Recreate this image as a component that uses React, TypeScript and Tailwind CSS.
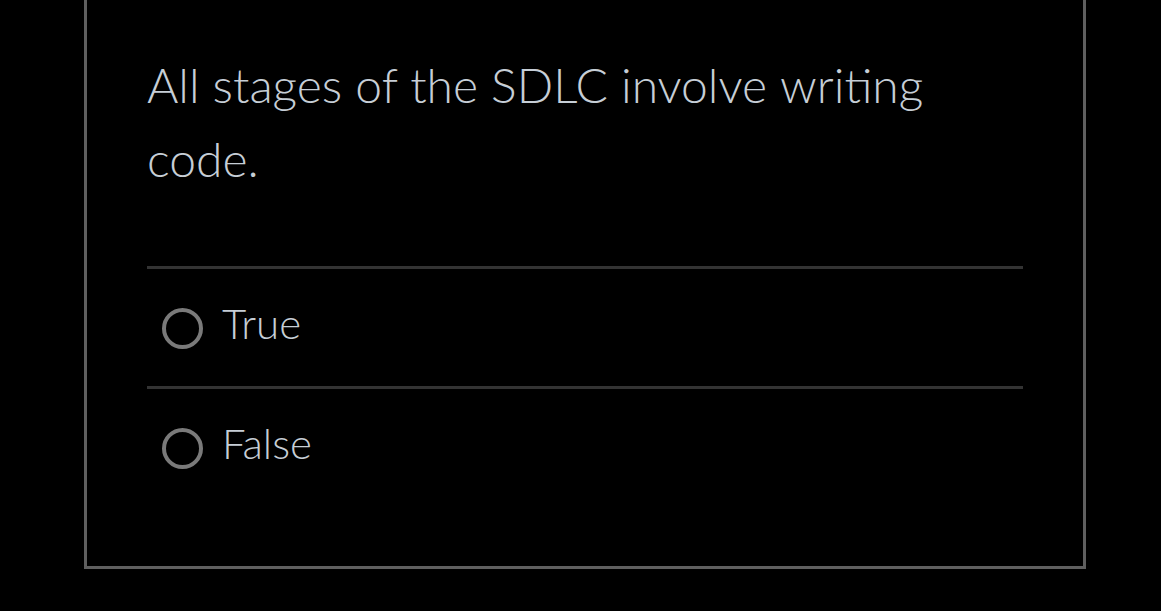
export default function App() {
  const font = { fontFamily: 'Lato, "Noto Sans", sans-serif' };
  return (
    <div className="w-[1161px] h-[611px] bg-black overflow-hidden" style={font}>
      <div className="ml-[84px] w-[1002px] h-[569px] border-[3px] border-t-0 border-[#5f5f5f] pl-[60px] pr-[60px]">
        <div className="pt-[48px] text-[48px] leading-[74px] font-light text-[#c6ced6]">
          All stages of the SDLC involve{" "}
          <span className="[font-variant-ligatures:common-ligatures_discretionary-ligatures]">writing</span> code.
        </div>
        <div className="mt-[70px]">
          {["True", "False"].map((t) => (
            <div key={t} className="border-t-[3px] border-[#333333] h-[120px] flex items-center pl-[15px] pb-[4px]">
              <div className="w-[41px] h-[41px] rounded-full border-[4px] border-[#7a7a7a] mt-[6px]" />
              <span className="ml-[19px] mb-[6px] text-[42px] font-light text-[#c6ced6] leading-none">{t}</span>
            </div>
          ))}
        </div>
      </div>
    </div>
  );
}
